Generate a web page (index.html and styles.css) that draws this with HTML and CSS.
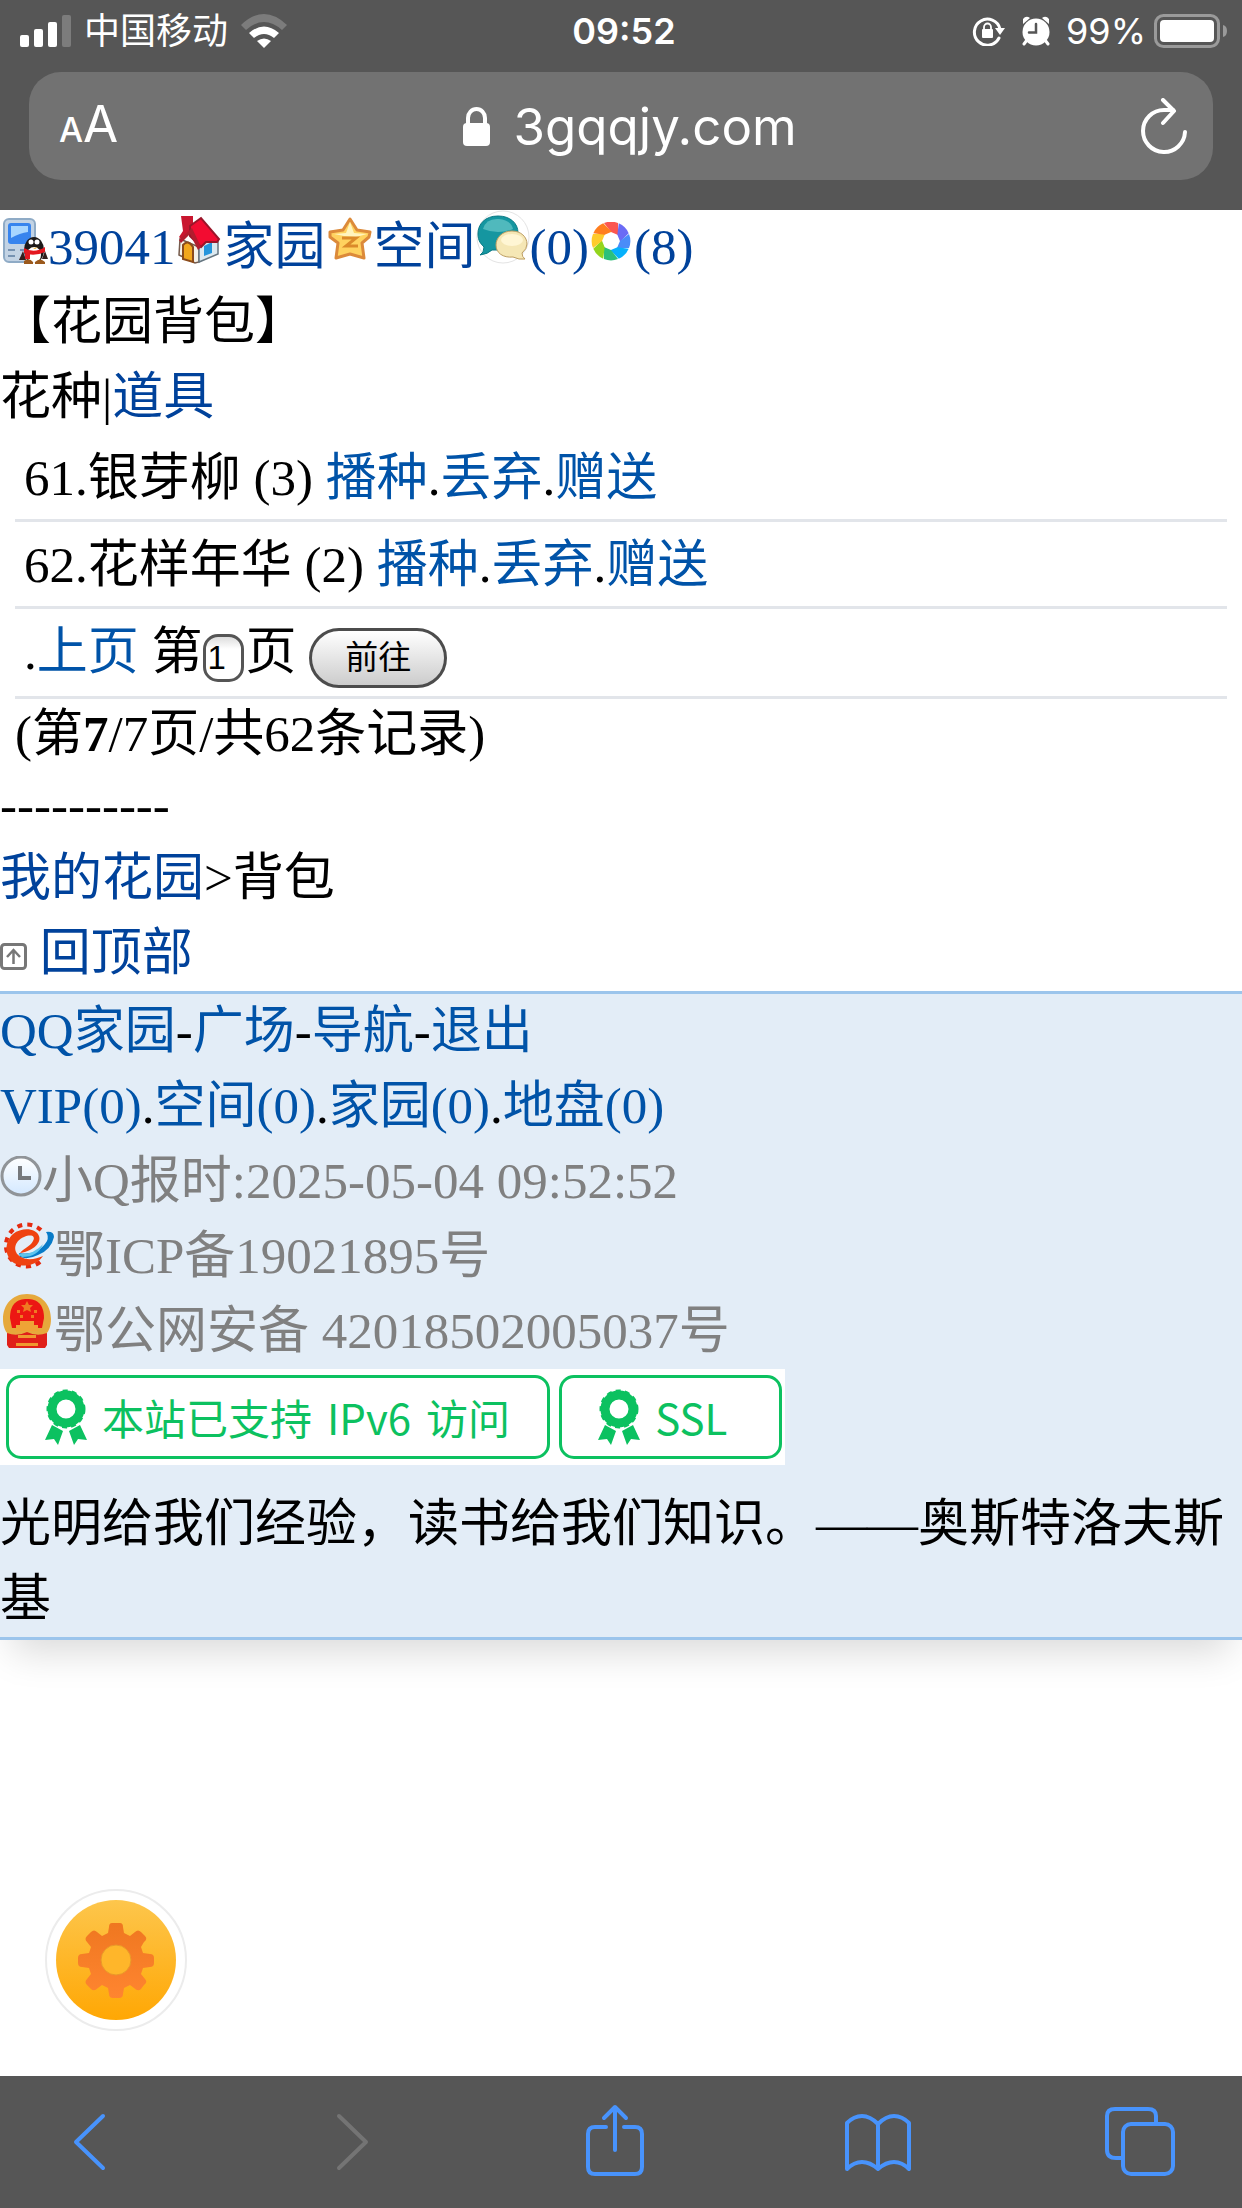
FILE: index.html
```html
<!DOCTYPE html>
<html lang="zh-CN">
<head>
    <meta charset="UTF-8">
    <meta name="viewport" content="width=device-width, initial-scale=1.0">
    <title>花园背包</title>
    <link rel="stylesheet" href="styles.css">
</head>
<body>
    <header class="browser-top">
        <div class="status-bar">
            <div class="status-left">
                <svg class="signal" width="51" height="32" viewBox="0 0 51 32" fill="#fff">
                    <rect x="0" y="20" width="9" height="12" rx="2"/>
                    <rect x="14" y="14" width="9" height="18" rx="2"/>
                    <rect x="28" y="7" width="9" height="25" rx="2"/>
                    <rect x="42" y="0" width="9" height="32" rx="2" fill="#7c7c7c"/>
                </svg>
                <span>中国移动</span>
                <svg class="wifi" width="46" height="34" viewBox="0 0 46 34">
                    <path d="M0 11Q23 -11 46 11L41 16Q23 0 5 16Z" fill="#7c7c7c"/>
                    <path d="M8 19Q23 6 38 19L33 24Q23 16 13 24Z" fill="#fff"/>
                    <path d="M16 27Q23 22 30 27L23 34Z" fill="#fff"/>
                </svg>
            </div>
            <span class="time">09:52</span>
            <div class="status-right">
                <svg class="rotation" width="34" height="30" viewBox="0 0 34 30">
                    <path d="M27 22A13 13 0 1 1 28 13" fill="none" stroke="#fff" stroke-width="3" stroke-linecap="round"/>
                    <path d="M23 12H33L28 19Z" fill="#fff"/>
                    <rect x="10" y="13" width="11" height="9" rx="1" fill="#fff"/>
                    <path d="M12 13V11a3.500 3.500 0 0 1 7 0V13" fill="none" stroke="#fff" stroke-width="1.800"/>
                </svg>
                <svg class="alarm" width="28" height="30" viewBox="0 0 28 30">
                    <path d="M1 8V3Q4 -1 8 2ZM27 8V3Q24 -1 20 2Z" fill="#fff"/>
                    <path d="M5 24L2 28M23 24L26 28" stroke="#fff" stroke-width="3" stroke-linecap="round"/>
                    <circle cx="14" cy="16" r="13.500" fill="#fff"/>
                    <path d="M14 8V16.500H7" fill="none" stroke="#565656" stroke-width="2.500" stroke-linecap="round"/>
                </svg>
                <span>99%</span>
                <svg class="battery" width="74" height="34" viewBox="0 0 74 34">
                    <rect x="1.500" y="1.500" width="63" height="31" rx="8" fill="none" stroke="#9a9a9a" stroke-width="3"/>
                    <rect x="6" y="6" width="54" height="22" rx="4" fill="#fff"/>
                    <path d="M69 11Q73 12 73 17T69 23Z" fill="#9a9a9a"/>
                </svg>
            </div>
        </div>
        <div class="url-bar">
            <button class="text-size" aria-label="页面设置"><span class="small-a">A</span>A</button>
            <div class="address">
                <svg width="27" height="39" viewBox="0 0 27 39">
                    <path d="M5 18V11a8.500 9 0 0 1 17 0V18" fill="none" stroke="#fff" stroke-width="4"/>
                    <rect x="0" y="16" width="27" height="23" rx="4" fill="#fff"/>
                </svg>
                <span>3gqqjy.com</span>
            </div>
            <button class="reload" aria-label="刷新">
                <svg width="46" height="56" viewBox="0 0 46 56" fill="none" stroke="#fff" stroke-width="4" stroke-linecap="round" stroke-linejoin="round">
                    <path d="M44 34A21 21 0 1 1 23 12H32"/>
                    <path d="M22 2L33 13L22 25"/>
                </svg>
            </button>
        </div>
    </header>

    <main>
        <div class="line top-links">
            <a href="#"><svg class="icon" width="48" height="48" viewBox="0 0 48 48">
                <rect x="4" y="3" width="31" height="43" rx="5" fill="#c3d3e4" stroke="#8fabc6" stroke-width="2"/>
                <rect x="8" y="7" width="23" height="21" rx="3" fill="#3784ee"/>
                <path d="M11 10H28V16Q20 17 11 22Z" fill="#a8d6ff"/>
                <path d="M8 34H15M8 40H15M20 34H25" stroke="#7692b1" stroke-width="2"/>
                <ellipse cx="34" cy="34" rx="10" ry="13" fill="#1c1918"/>
                <path d="M23 35L19 44H26ZM45 35L48 43H42Z" fill="#31201d"/>
                <ellipse cx="34" cy="39" rx="7" ry="8" fill="#fff"/>
                <circle cx="31" cy="26" r="2.500" fill="#fff"/><circle cx="37" cy="26" r="2.500" fill="#fff"/>
                <path d="M29 30Q34 34 40 30L35 33Z" fill="#f5ae18"/>
                <path d="M24 32Q34 38 45 31V36Q34 41 24 37ZM25 37H30V43H25Z" fill="#e41820"/>
                <path d="M24 45Q29 41 33 46V48H24ZM35 46Q40 41 45 46V48H35Z" fill="#9b591c"/>
            </svg>39041</a><a href="#"><svg class="icon" width="48" height="48" viewBox="0 0 48 48">
                <path d="M4 23L23 31V46L19 47L3 39Z" fill="#f4f1e7" stroke="#765b4c" stroke-width="1.500"/>
                <path d="M23 29L35 19L42 23V38L23 46Z" fill="#dce9f0" stroke="#667681" stroke-width="1.500"/>
                <path d="M7 43V29Q12 23 17 31V46Z" fill="#f2a71c" stroke="#8b4b1b" stroke-width="2"/>
                <path d="M28 30L36 26V37L28 40Z" fill="#2495dc"/>
                <path d="M5 0H17V13L6 24L3 21L7 15Z" fill="#c9162f"/>
                <path d="M14 10L25 2L43 23L41 26H30L25 31L14 20Z" fill="#f20c31" stroke="#9a1529" stroke-width="2"/>
                <path d="M3 24L16 12L25 31L22 34L14 18L5 27Z" fill="#b11d2e"/>
            </svg>家园</a><a href="#"><svg class="icon" width="48" height="48" viewBox="0 0 48 48">
                <path d="M24 3L31 14L44 16L43 21L36 27L38 42L24 38L10 42L12 27L4 21V16L17 14Z" fill="#ffd25f" stroke="#dc8a3a" stroke-width="3" stroke-linejoin="round"/>
                <path d="M24 6L28 17L41 18L30 21L18 20L8 18L20 17Z" fill="#fff4be"/>
                <path d="M16 22H30L20 30H32" fill="none" stroke="#db8a2a" stroke-width="3"/>
            </svg>空间</a><a href="#"><svg class="icon" width="54" height="54" viewBox="0 0 54 54">
                <circle cx="27" cy="27" r="26" fill="#fff" stroke="#e4e4e4" stroke-width="1"/>
                <path d="M22 6C9 6 2 14 2 24C2 31 5 34 8 37Q8 43 4 45Q12 44 16 40H22C34 40 42 33 42 23C42 13 34 6 22 6Z" fill="#1596a0" stroke="#087984" stroke-width="1"/>
                <path d="M7 19Q10 8 23 9Q35 10 37 19Q22 25 7 19Z" fill="#50b9bd"/>
                <path d="M36 21C26 21 20 28 20 35C20 43 27 48 37 47Q43 50 49 49Q46 47 46 43Q51 39 51 34C51 27 45 21 36 21Z" fill="#f5e7b5" stroke="#bd9e62" stroke-width="1"/>
                <ellipse cx="36" cy="30" rx="11" ry="6" fill="#fff6d4"/>
            </svg>(0)</a><a href="#"><svg class="icon" width="45" height="42" viewBox="-22 -19 45 42">
                <defs>
                    <path id="blade" d="M-7 -18A19 19 0 0 1 7 -18L7 -6L0 -9Z"/>
                </defs>
                <use href="#blade" fill="#fb5650"/>
                <use href="#blade" fill="#6b6bf5" transform="rotate(45)"/>
                <use href="#blade" fill="#4a8cf8" transform="rotate(90)"/>
                <use href="#blade" fill="#06b1fb" transform="rotate(135)"/>
                <use href="#blade" fill="#2cc07a" transform="rotate(180)"/>
                <use href="#blade" fill="#93d51d" transform="rotate(225)"/>
                <use href="#blade" fill="#fecb2c" transform="rotate(270)"/>
                <use href="#blade" fill="#ff7e1f" transform="rotate(315)"/>
            </svg>(8)</a>
        </div>
        <div class="line">【花园背包】</div>
        <div class="line">花种|<a href="#">道具</a></div>

        <ul class="bag-list">
            <li>61.银芽柳 (3) <a href="#">播种</a>.<a href="#">丢弃</a>.<a href="#">赠送</a></li>
            <li>62.花样年华 (2) <a href="#">播种</a>.<a href="#">丢弃</a>.<a href="#">赠送</a></li>
            <li class="pager">
                <form onsubmit="return false">
                    .<a href="#">上页</a> <label for="page">第</label><input type="text" id="page" value="1">页 <button class="go">前往</button>
                </form>
            </li>
        </ul>
        <div class="count">(第<b>7</b>/7页/共62条记录)</div>
        <div class="divider">----------</div>
        <div class="line"><a href="#">我的花园</a>&gt;背包</div>
        <div class="line"><svg class="icon" width="27" height="27" viewBox="0 0 27 27" fill="none" stroke="#777" stroke-width="3">
            <rect x="1.500" y="1.500" width="24" height="24" rx="3"/>
            <path d="M13.500 21V7M7 14L13.500 7L20 14" stroke-width="2.500"/>
        </svg> <a href="#">回顶部</a></div>

        <footer class="site-footer">
            <div class="line"><a href="#">QQ家园</a>-<a href="#">广场</a>-<a href="#">导航</a>-<a href="#">退出</a></div>
            <div class="line"><a href="#">VIP(0)</a>.<a href="#">空间(0)</a>.<a href="#">家园(0)</a>.<a href="#">地盘(0)</a></div>
            <div class="line grey"><svg class="icon" width="42" height="42" viewBox="0 0 42 42">
                <defs>
                    <linearGradient id="clockFace" x2="0" y2="1"><stop stop-color="#fff"/><stop offset="1" stop-color="#d3e8ff"/></linearGradient>
                </defs>
                <circle cx="21" cy="20" r="19" fill="url(#clockFace)" stroke="#909498" stroke-width="3"/>
                <path d="M20 10V22H31" fill="none" stroke="#75787c" stroke-width="4"/>
            </svg>小Q报时:2025-05-04 09:52:52</div>
            <div class="line"><a class="grey" href="#"><svg class="icon" width="54" height="54" viewBox="0 0 54 54">
                <path d="M41 11A21 21 0 1 0 43 40" fill="none" stroke="#e52b10" stroke-width="4" stroke-dasharray="5 5"/>
                <path d="M19 34Q38 37 47 22Q49 17 46 13Q54 12 54 18Q51 31 38 36Q28 41 20 38Z" fill="#087bc8"/>
                <path d="M18 35Q34 36 43 25Q38 38 22 38Z" fill="#5cc4ee"/>
                <path d="M20 34C30 33 42 25 39 17C36 9 22 8 13 15C3 24 5 40 16 45C26 49 38 45 43 37C36 40 28 42 21 38C12 33 14 22 24 18C31 15 36 17 33 22C30 28 25 28 20 34Z" fill="#ef4211"/>
            </svg>鄂ICP备19021895号</a></div>
            <div class="line"><a class="grey" href="#"><svg class="icon" width="54" height="54" viewBox="0 0 54 54">
                <path d="M27 0C12 0 3 11 3 25C3 32 5 37 8 40V52H46V40C49 37 51 32 51 25C51 11 42 0 27 0Z" fill="#e6a93c"/>
                <path d="M10 24C10 10 17 5 27 5S44 10 44 24L42 34H12Z" fill="#ec1713"/>
                <path d="M27 7L29 11H33L30 14L31 18L27 16L23 18L24 14L21 11H25Z" fill="#ef7a22"/>
                <path d="M17 16h3v3h-3zM34 16h3v3h-3zM20 21h3v3h-3zM31 21h3v3h-3z" fill="#ef7a22"/>
                <path d="M16 31H38V37H16ZM20 27H34V31H20Z" fill="#efa336"/>
                <path d="M7 39Q17 43 27 38Q37 43 47 39V51L45 54H9L7 51Z" fill="#e0201a"/>
                <path d="M18 41H36V44H18ZM16 49H38V52H16Z" fill="#ef9a30"/>
            </svg>鄂公网安备 42018502005037号</a></div>
            <div class="badges">
                <span class="badge ipv6">
                    <svg width="42" height="56" viewBox="0 0 42 56" fill="#0cc160">
                        <circle cx="21" cy="20" r="14" fill="none" stroke="#0cc160" stroke-width="9"/>
                        <circle cx="21" cy="20" r="18" fill="none" stroke="#0cc160" stroke-width="3" stroke-dasharray="5 4"/>
                        <path d="M7 36L18 42L13 56L9 50L0 51ZM35 36L24 42L29 56L33 50L42 51Z"/>
                    </svg>
                    <span>本站已支持</span> <span>IPv6</span> <span>访问</span>
                </span>
                <span class="badge ssl">
                    <svg width="42" height="56" viewBox="0 0 42 56" fill="#0cc160">
                        <circle cx="21" cy="20" r="14" fill="none" stroke="#0cc160" stroke-width="9"/>
                        <circle cx="21" cy="20" r="18" fill="none" stroke="#0cc160" stroke-width="3" stroke-dasharray="5 4"/>
                        <path d="M7 36L18 42L13 56L9 50L0 51ZM35 36L24 42L29 56L33 50L42 51Z"/>
                    </svg>
                    <span>SSL</span>
                </span>
            </div>
            <div class="line">光明给我们经验，读书给我们知识。——奥斯特洛夫斯基</div>
        </footer>
    </main>

    <!-- Floating settings button -->
    <button class="settings" aria-label="设置">
        <svg width="142" height="142" viewBox="0 0 142 142">
            <defs>
                <linearGradient id="disc" x2="0" y2="1"><stop stop-color="#fdc64c"/><stop offset="1" stop-color="#ffa704"/></linearGradient>
                <linearGradient id="gear" x2="0" y2="1"><stop stop-color="#ef7720"/><stop offset="1" stop-color="#ff8530"/></linearGradient>
            </defs>
            <circle cx="71" cy="71" r="70" fill="#fff" stroke="#ececec" stroke-width="2"/>
            <circle cx="71" cy="71" r="60" fill="url(#disc)"/>
            <path d="M67 34H75Q78 34 78 38L79 44L85 47L90 43Q93 40 96 43L100 47Q103 50 99 53L96 58L98 64L105 65Q109 65 109 69V74Q109 78 105 78L98 79L96 85L100 90Q103 93 99 96L96 100Q93 103 89 99L85 96L79 99L78 105Q78 109 74 109H68Q64 109 64 105L63 99L57 96L53 99Q49 103 46 100L42 96Q39 93 42 90L46 85L44 79L37 78Q33 78 33 74V69Q33 65 37 65L44 64L46 58L42 53Q39 50 42 47L46 43Q49 40 52 43L57 47L63 44L64 38Q64 34 67 34Z" fill="url(#gear)"/>
            <circle cx="71" cy="71" r="15" fill="#ffb62a" stroke="#e99829" stroke-width="1"/>
        </svg>
    </button>

    <nav class="toolbar">
        <button aria-label="后退">
            <svg width="72" height="72" viewBox="0 0 72 72"><path d="M49 12L22 38L49 64"/></svg>
        </button>
        <button class="disabled" aria-label="前进" disabled>
            <svg width="72" height="72" viewBox="0 0 72 72"><path d="M22 12L49 38L22 64"/></svg>
        </button>
        <button aria-label="分享">
            <svg width="72" height="72" viewBox="0 0 72 72"><path d="M27 23H16Q9 23 9 30V63Q9 70 16 70H56Q63 70 63 63V30Q63 23 56 23H45M36 46V3M25 14L36 3L47 14"/></svg>
        </button>
        <button aria-label="书签">
            <svg width="72" height="72" viewBox="0 0 72 72"><path d="M36 20Q28 12 20 12T5 19V65Q12 58 20 58T36 65Q44 58 52 58T67 65V19Q60 12 52 12T36 20V65"/></svg>
        </button>
        <button aria-label="标签页">
            <svg width="72" height="72" viewBox="0 0 72 72"><path d="M19 54H12Q3 54 3 46V12Q3 5 11 5H44Q52 5 52 12V20"/><rect x="19" y="20" width="50" height="50" rx="8"/></svg>
        </button>
    </nav>
</body>
</html>
```
FILE: styles.css
```css
* {
    box-sizing: border-box;
}

body {
    margin: 0;
    min-height: 100vh;
    display: flex;
    flex-direction: column;
    position: relative;
    background: #fff;
    color: #000;
    font-family: "Liberation Serif", "Noto Sans CJK SC", serif;
    font-size: 51px;
    line-height: 75px;
}

a {
    color: #00429b;
    text-decoration: none;
}

button {
    font: inherit;
    padding: 0;
    border: none;
    background: none;
    cursor: pointer;
}

svg {
    display: block;
    flex: none;
}

/* Browser chrome */
.browser-top {
    height: 210px;
    background: #565656;
    color: #fff;
    font-family: Inter, "Noto Sans CJK SC", sans-serif;
}

.status-bar {
    display: grid;
    grid-template-columns: 1fr auto 1fr;
    align-items: center;
    height: 62px;
    padding: 0 14px 0 20px;
    font-size: 36px;
    line-height: 62px;
}

.status-left,
.status-right {
    display: flex;
    align-items: center;
}

.status-left {
    gap: 13px;
}

.status-right {
    justify-content: flex-end;
    gap: 16px;
}

.status-right .battery {
    margin-left: -8px;
}

.time {
    font-weight: 600;
}

.url-bar {
    display: flex;
    align-items: center;
    justify-content: space-between;
    height: 108px;
    margin: 10px 29px 0;
    padding: 0 26px 0 30px;
    border-radius: 32px;
    background: #727272;
}

.url-bar button {
    color: #fff;
}

.address {
    display: flex;
    align-items: center;
    gap: 24px;
}

.small-a {
    font-size: 34px;
    font-weight: 500;
}

/* Page */
main {
    flex: 1;
}

.icon {
    display: inline-block;
    vertical-align: baseline;
}

.bag-list {
    list-style: none;
    margin: 0 15px;
    padding: 0;
}

.bag-list li {
    padding: 6px 9px 3px;
    border-bottom: 3px solid #e2e5ea;
}

.bag-list .pager {
    padding-bottom: 6px;
}

.bag-list a,
.site-footer a {
    color: #0053a8;
}

#page {
    width: 41px;
    height: 48px;
    margin: 0 2px 0 0;
    padding: 0 2px;
    border: 3px solid #555;
    border-radius: 15px;
    background: linear-gradient(#ddd, #fff 12px);
    font-family: "Liberation Sans", sans-serif;
    font-size: 33px;
}

.go {
    height: 60px;
    padding: 0 33px;
    border: 3px solid #4c4c4c;
    border-radius: 30px;
    background: linear-gradient(#fff, #ccc);
    font-family: "Liberation Sans", "Noto Sans CJK SC", sans-serif;
    font-size: 33px;
    line-height: 54px;
}

.count {
    padding-left: 15px;
    line-height: 71px;
}

.divider {
    line-height: 71px;
}

.site-footer {
    border-top: 3px solid #9cc5ec;
    border-bottom: 3px solid #9cc5ec;
    background: #e3edf7;
    box-shadow: 0 24px 36px -12px rgba(0, 0, 0, 0.15);
}

.grey,
.site-footer a.grey {
    color: #808080;
}

.badges {
    display: flex;
    gap: 9px;
    width: fit-content;
    margin-bottom: 22px;
    padding: 6px 3px 6px 6px;
    background: #fff;
}

.badge {
    display: flex;
    align-items: center;
    gap: 15px;
    height: 84px;
    padding-left: 36px;
    border: 3px solid #0cc160;
    border-radius: 15px;
    color: #0cc160;
    font-family: "Noto Sans CJK SC", sans-serif;
    font-size: 42px;
    line-height: 78px;
    white-space: nowrap;
}

.ipv6 {
    padding-right: 37px;
}

.ssl {
    padding-right: 52px;
}

.settings {
    position: absolute;
    left: 45px;
    bottom: 177px;
    line-height: 0;
}

.toolbar {
    display: flex;
    justify-content: space-between;
    height: 132px;
    padding: 28px 66px 0 54px;
    background: #565656;
}

.toolbar button {
    height: 72px;
}

.toolbar svg {
    fill: none;
    stroke: #4893fc;
    stroke-width: 4;
    stroke-linecap: round;
    stroke-linejoin: round;
}

.toolbar .disabled svg {
    stroke: #747474;
}
```
